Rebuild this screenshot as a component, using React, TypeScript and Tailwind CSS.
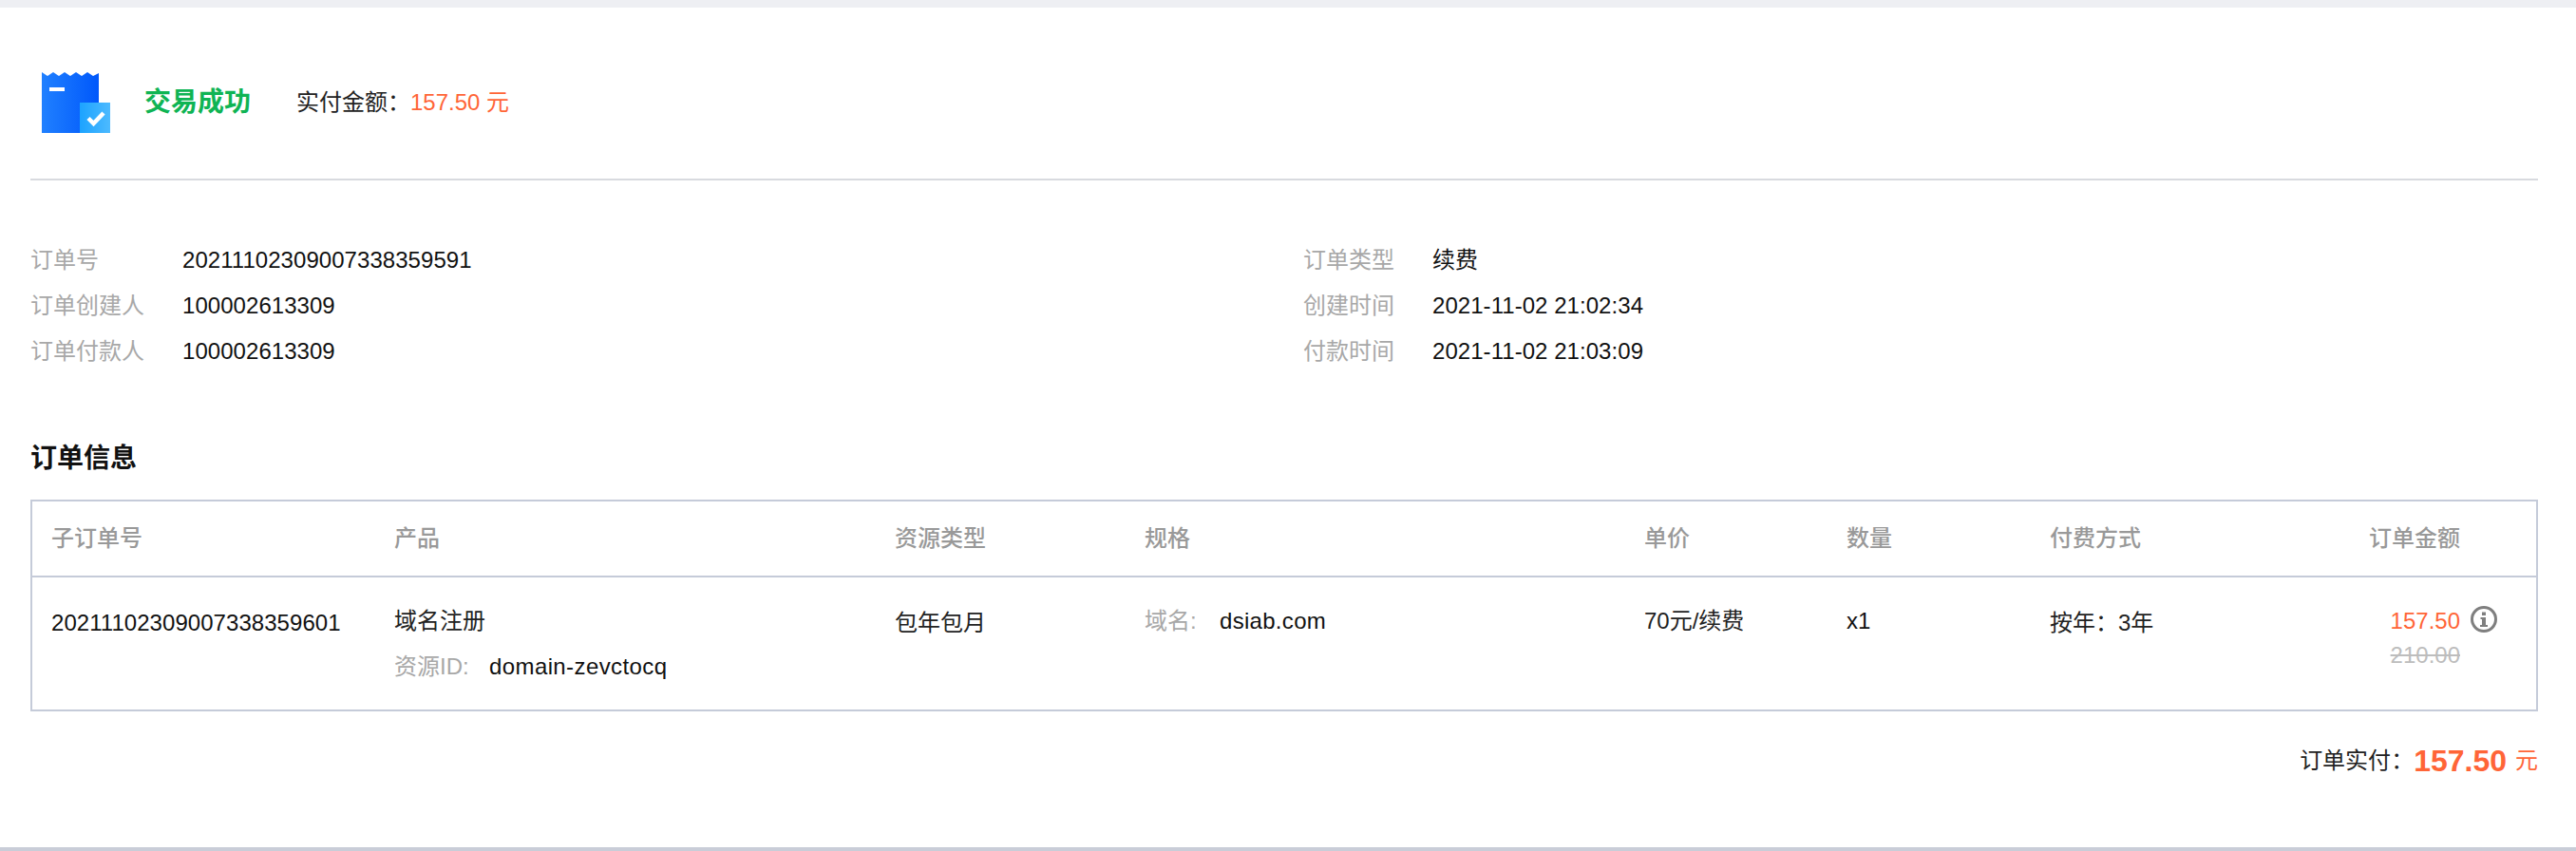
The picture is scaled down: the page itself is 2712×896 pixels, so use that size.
import React from "react";

const font = "font-['Liberation_Sans','Noto_Sans_CJK_SC',sans-serif]";
// fullwidth colon
const colon = "\uFF1A";

function ReceiptIcon() {
  return (
    <svg width="72" height="64" viewBox="0 0 72 64" className="block shrink-0">
      <defs>
        <linearGradient id="body" x1="0" y1="0" x2="1" y2="0">
          <stop offset="0" stopColor="#2080ff" />
          <stop offset="1" stopColor="#0058fb" />
        </linearGradient>
        <linearGradient id="badge" x1="0" y1="0" x2="1" y2="0">
          <stop offset="0" stopColor="#1ca3ff" />
          <stop offset="1" stopColor="#4dbaff" />
        </linearGradient>
      </defs>
      <path
        d="M0 0 L6 4 L12 0 L18 4 L24 0 L30 4 L36 0 L42 4 L48 0 L54 4 L60 1 L60 64 L0 64 Z"
        fill="url(#body)"
      />
      <rect x="8" y="16" width="16" height="4" fill="#fff" />
      <rect x="40" y="32" width="32" height="32" fill="url(#badge)" />
      <path d="M49 48.5 L54.5 54 L65 43" fill="none" stroke="#fff" strokeWidth="4.5" />
    </svg>
  );
}

function InfoIcon() {
  return (
    <svg width="28" height="28" viewBox="0 0 28 28" className="block shrink-0">
      <circle cx="14" cy="14" r="12.5" fill="none" stroke="#7f7f7f" strokeWidth="3" />
      <rect x="12" y="6.5" width="4" height="3.5" fill="#7f7f7f" />
      <path d="M10.5 12h5.5v8h2v2h-8v-2h2v-6h-1.5z" fill="#7f7f7f" />
    </svg>
  );
}

function InfoRow({ label, value, labelWidth }: { label: string; value: string; labelWidth: string }) {
  return (
    <div className="flex h-12 items-center">
      <span className={`${labelWidth} shrink-0 text-[#a8a8a8]`}>{label}</span>
      <span className="tracking-[0.05px] text-[#111]">{value}</span>
    </div>
  );
}

const th = "px-0 text-left font-medium text-[#999]";

export default function App() {
  return (
    <div className={`${font} flex h-[896px] w-[2712px] flex-col bg-white text-[24px] leading-8 text-[#111]`}>
      <div className="h-2 shrink-0 bg-[#eeeff3]" />
      <div className="flex-1 pr-10 pl-8">
        <div className="flex items-center border-b-2 border-[#d8dadf] pt-[68px] pb-12 pl-3">
          <ReceiptIcon />
          <span className="ml-9 text-[28px] font-bold text-[#0fb454]">交易成功</span>
          <span className="ml-12 text-[#222]">实付金额{colon}</span>
          <span className="text-[#ff6537]">157.50 元</span>
        </div>

        <div className="mt-[60px] flex">
          <div className="w-[1340px]">
            <InfoRow label="订单号" value="20211102309007338359591" labelWidth="w-40" />
            <InfoRow label="订单创建人" value="100002613309" labelWidth="w-40" />
            <InfoRow label="订单付款人" value="100002613309" labelWidth="w-40" />
          </div>
          <div>
            <InfoRow label="订单类型" value="续费" labelWidth="w-[136px]" />
            <InfoRow label="创建时间" value="2021-11-02 21:02:34" labelWidth="w-[136px]" />
            <InfoRow label="付款时间" value="2021-11-02 21:03:09" labelWidth="w-[136px]" />
          </div>
        </div>

        <h2 className="mt-[69px] text-[28px] leading-10 font-bold text-[#111]">订单信息</h2>

        <table className="mt-[23px] w-full table-fixed border-collapse border-2 border-[#c5cbd9]">
          <colgroup>
            <col className="w-[382px]" />
            <col className="w-[527px]" />
            <col className="w-[263px]" />
            <col className="w-[526px]" />
            <col className="w-[213px]" />
            <col className="w-[214px]" />
            <col />
            <col className="w-[300px]" />
          </colgroup>
          <thead>
            <tr className="h-[80px] border-b-2 border-[#c5cbd9]">
              <th className={`${th} pl-5`}>子订单号</th>
              <th className={th}>产品</th>
              <th className={th}>资源类型</th>
              <th className={th}>规格</th>
              <th className={th}>单价</th>
              <th className={th}>数量</th>
              <th className={th}>付费方式</th>
              <th className="pr-20 text-right font-medium text-[#999]">订单金额</th>
            </tr>
          </thead>
          <tbody>
            <tr className="h-[141px] align-top">
              <td className="pt-8 pl-5 tracking-[0.05px]">20211102309007338359601</td>
              <td className="pt-[30px]">
                <div className="leading-8 text-[#222]">域名注册</div>
                <div className="mt-4 flex">
                  <span className="w-[100px] text-[#a8a8a8]">资源ID:</span>
                  <span className="tracking-[0.4px]">domain-zevctocq</span>
                </div>
              </td>
              <td className="pt-8 text-[#222]">包年包月</td>
              <td className="pt-[30px]">
                <span className="inline-block w-[79px] text-[#a8a8a8]">域名:</span>
                <span className="tracking-[0.3px]">dsiab.com</span>
              </td>
              <td className="pt-[30px] text-[#222]">70元/续费</td>
              <td className="pt-[30px]">x1</td>
              <td className="pt-8 text-[#222]">按年{colon}3年</td>
              <td className="relative pt-[30px] pr-20 text-right">
                <div className="text-[#ff6537]">157.50</div>
                <div className="mt-1 text-[#bdbdbd] line-through">210.00</div>
                <div className="absolute top-[30px] right-[41px]">
                  <InfoIcon />
                </div>
              </td>
            </tr>
          </tbody>
        </table>

        <div className="mt-9 flex items-center justify-end">
          <span className="text-[#222]">订单实付{colon}</span>
          <span className="text-[32px] font-bold text-[#ff6537]">157.50</span>
          <span className="ml-[9px] text-[#ff6537]">元</span>
        </div>
      </div>
      <div className="h-1 shrink-0 bg-[#c9cdd8]" />
    </div>
  );
}
